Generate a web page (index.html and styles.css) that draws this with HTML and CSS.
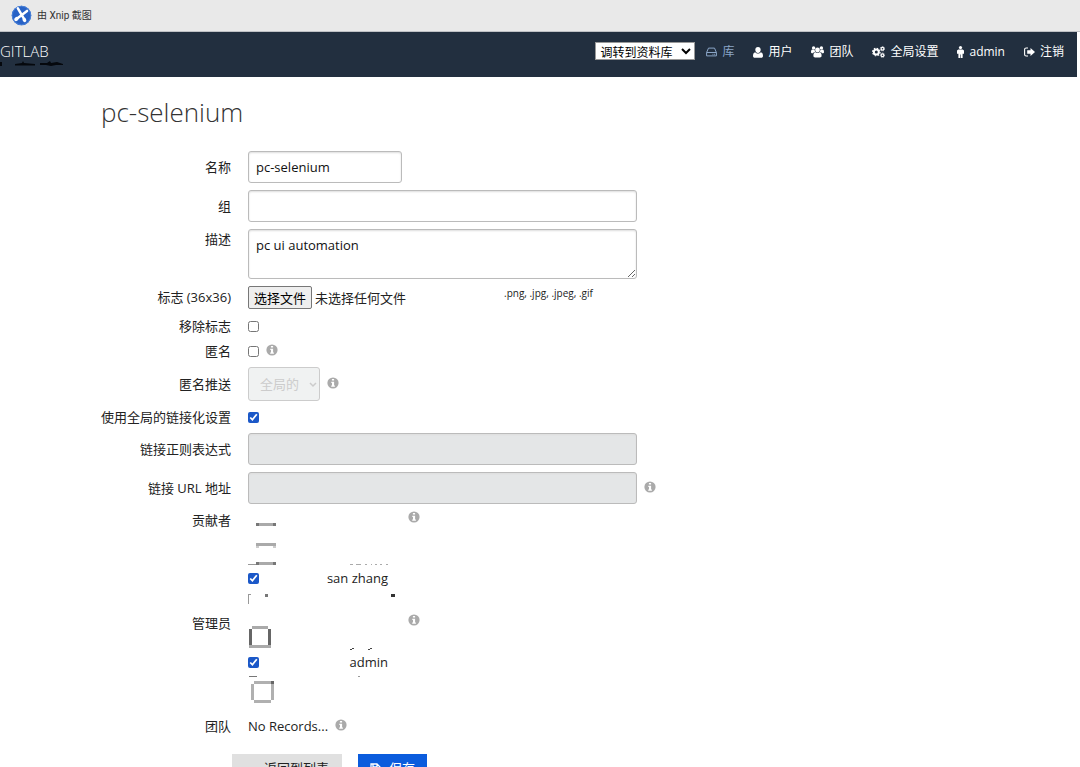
FILE: index.html
```html
<!DOCTYPE html>
<html lang="zh-CN">
<head>
<meta charset="utf-8">
<title>pc-selenium</title>
<link rel="stylesheet" href="styles.css">
</head>
<body>
<svg class="defs" width="0" height="0" aria-hidden="true">
  <symbol id="info" viewBox="0 0 12 12"><circle cx="6" cy="6" r="5.6" fill="#aaa"/><path d="M4.9 1.9h2.2v1.7H4.9zM4.3 4.7h2.8v3.7h.8v1.3H4.2V8.4H5V6h-.7z" fill="#fff"/></symbol>
</svg>
<div class="capture">
  <svg class="capture-logo" viewBox="0 0 22 22"><circle cx="11" cy="11" r="10.2" fill="#2862c6"/><circle cx="11" cy="11" r="9.7" fill="none" stroke="#4b82d8"/><path d="M7.2 3.5 12.7 13M16.8 6.2 7.5 13.3" stroke="#fff" stroke-width="2.6" stroke-linecap="round"/><ellipse cx="5.7" cy="14.6" rx="2.5" ry="2" fill="#fff" transform="rotate(-38 5.7 14.6)"/><ellipse cx="14" cy="15.5" rx="1.9" ry="2.6" fill="#fff" transform="rotate(-25 14 15.5)"/></svg>
  <span>由 Xnip 截图</span>
</div>
<header class="navbar">
  <div class="brand">GITLAB
    <svg class="brand-marks" viewBox="0 0 64 8"><path d="M0 2h2v4H0zM15 4l7-1 1-2 1 2 11 1v1.500H15zM40 3l7 0 3-2 1 2 6-1 6 2v1h-7l-5 1-5-1h-6z" fill="#05080d"/></svg>
  </div>
  <nav class="menu">
    <select class="jump" aria-label="调转到资料库"><option>调转到资料库</option></select>
    <a class="item active" href="#"><svg width="11" height="10" viewBox="0 0 11 10"><path d="M.6 5.500 2.500 1.100h6l1.900 4.400v3.400H.6zM.6 5.500h9.800M6.500 7.300h.9M8.200 7.300h.9" fill="none" stroke="currentColor"/></svg>库</a>
    <a class="item" href="#"><svg width="10" height="11" viewBox="0 0 10 11"><path d="M5 0C3.200 0 2.300 1.300 2.300 2.800S3.500 6 5 6s2.700-1.700 2.700-3.200S6.800 0 5 0zM2.200 5.200C.5 5.600 0 7.200 0 9c0 1.200.8 1.800 1.800 1.800h6.400C9.200 10.800 10 10.200 10 9c0-1.800-.5-3.400-2.200-3.800C6.500 7 3.500 7 2.200 5.200z" fill="currentColor"/></svg>用户</a>
    <a class="item" href="#"><svg width="13" height="12" viewBox="0 0 13 12"><g fill="currentColor"><circle cx="2.600" cy="2" r="1.700"/><circle cx="10.400" cy="2" r="1.700"/><circle cx="6.500" cy="4" r="2.400"/><path d="M0 6.300C0 4.800.4 3.700 1.200 3.600c.8.600 1.800.6 2.500.2-.1 1 .1 1.800.7 2.400H2.800L2 7.200H1C.4 7.200 0 6.900 0 6.300zM13 6.300c0-1.500-.4-2.600-1.200-2.700-.8.600-1.800.6-2.500.2.1 1-.1 1.800-.7 2.400h1.600l.8 1h1c.6 0 1-.3 1-.9zM4.400 6.300C2.800 6.600 2.400 8 2.400 9.700c0 1 .7 1.700 1.700 1.700h4.800c1 0 1.700-.7 1.700-1.700 0-1.700-.4-3.100-2-3.400-1.200 1-3 1-4.200 0z"/></g></svg>团队</a>
    <a class="item" href="#"><svg width="13" height="12" viewBox="0 0 13 12"><g fill="none" stroke="currentColor"><circle cx="4.300" cy="6" r="2.500" stroke-width="2"/><circle cx="4.300" cy="6" r="3.800" stroke-width="1.100" stroke-dasharray="1.500 1.485"/><circle cx="10.500" cy="2.700" r="1.400" stroke-width="1.200"/><circle cx="10.500" cy="2.700" r="2.200" stroke-width=".7" stroke-dasharray="1 .73"/><circle cx="10.500" cy="9.200" r="1.400" stroke-width="1.200"/><circle cx="10.500" cy="9.200" r="2.200" stroke-width=".7" stroke-dasharray="1 .73"/></g></svg>全局设置</a>
    <a class="item" href="#"><svg width="7" height="12" viewBox="0 0 7 12"><circle cx="3.500" cy="1.600" r="1.600" fill="currentColor"/><path d="M1.300 3.400h4.400L7 4.500v3.300H5.600V12H3.800V8.600h-.6V12H1.400V7.800H0V4.500z" fill="currentColor"/></svg>admin</a>
    <a class="item" href="#"><svg width="11" height="10" viewBox="0 0 11 10"><path d="M4 1H2.200C1.200 1 .6 1.600.6 2.500v5C.6 8.400 1.200 9 2.200 9H4" fill="none" stroke="currentColor" stroke-width="1.100"/><path d="M6.500 1 11 5 6.500 9V6.700H3.200V3.300h3.300z" fill="currentColor"/></svg>注销</a>
  </nav>
</header>
<main class="page">
  <h1 class="title">pc-selenium</h1>
  <form class="form">
    <div class="row"><label class="label" for="name">名称</label><div class="field"><input class="text short" id="name" type="text" value="pc-selenium"></div></div>
    <div class="row"><label class="label" for="group">组</label><div class="field"><input class="text" id="group" type="text"></div></div>
    <div class="row top"><label class="label" for="desc">描述</label><div class="field"><textarea class="text area" id="desc">pc ui automation</textarea></div></div>
    <div class="row upload"><label class="label" for="logo">标志 (36x36)</label><div class="field file"><span class="picker"><button class="choose" id="logo" type="button">选择文件</button><span>未选择任何文件</span></span><small class="hint">.png, .jpg, .jpeg, .gif</small></div></div>
    <div class="row line"><label class="label" for="remove">移除标志</label><div class="field"><input class="check" id="remove" type="checkbox"></div></div>
    <div class="row line"><label class="label" for="anon">匿名</label><div class="field"><input class="check" id="anon" type="checkbox"><svg class="info"><use href="#info"/></svg></div></div>
    <div class="row"><label class="label" for="push">匿名推送</label><div class="field"><span class="select-box"><select class="push" id="push" disabled><option>全局的</option></select><svg class="chevron" viewBox="0 0 8 6"><path d="m1 1 3 3 3-3" fill="none" stroke="#ccc" stroke-width="1.500"/></svg></span><svg class="info"><use href="#info"/></svg></div></div>
    <div class="row line"><label class="label" for="global">使用全局的链接化设置</label><div class="field"><input class="check" id="global" type="checkbox" checked></div></div>
    <div class="row"><label class="label" for="regex">链接正则表达式</label><div class="field"><input class="text" id="regex" type="text" disabled></div></div>
    <div class="row"><label class="label" for="url">链接 URL 地址</label><div class="field"><input class="text" id="url" type="text" disabled><svg class="info"><use href="#info"/></svg></div></div>
    <div class="row top people">
      <span class="label">贡献者</span>
      <div class="field members">
        <svg class="residue" viewBox="0 0 150 96" shape-rendering="crispEdges"><path d="M8 12h20v3H8zM10 51h17v3H10z" fill="#aaa"/><path d="M8 12h3v3H8zM25 12h3v3h-3zM8 51h3v3H8zM25 51h3v3h-3zM17 83h3v3h-3z" fill="#777"/><path d="M8 32h20v3H8z" fill="#aaa"/><path d="M8 35h3v2H8zM25 35h3v2h-3z" fill="#ccc"/><path d="M0 53h8v1H0zM0 83h1v10H0zM0 83h3v1H0z" fill="#999"/><path d="M102 53h3v1h-3zM108 53h5v1h-5zM117 53h2v1h-2zM123 53h1v1h-1zM127 53h2v1h-2zM132 53h2v1h-2zM138 53h2v1h-2z" fill="#aaa"/><path d="M143 83h4v3h-4z" fill="#333"/></svg>
        <label class="member"><input class="check" type="checkbox" checked><span>san zhang</span></label>
        <svg class="info"><use href="#info"/></svg>
      </div>
    </div>
    <div class="row top people">
      <span class="label">管理员</span>
      <div class="field members">
        <svg class="residue" viewBox="0 0 150 96" shape-rendering="crispEdges"><path d="M4 12h16v3H4zM1 31h22v3H1z" fill="#aaa"/><path d="M1 15h3v16H1zM20 15h3v16h-3z" fill="#666"/><path d="M1 62h8v1H1z" fill="#777"/><path d="M6 67h17v3H6zM3 70h3v16H3zM23 70h3v16h-3zM6 86h17v3H6z" fill="#b0b0b0"/><path d="M23 67h3v3h-3z" fill="#666"/><path d="M102 35h2v1h-2zM104 34h2v1h-2zM120 35h2v1h-2zM122 34h2v1h-2z" fill="#444"/><path d="M110 62h2v1h-2z" fill="#999"/></svg>
        <label class="member"><input class="check" type="checkbox" checked><span>admin</span></label>
        <svg class="info"><use href="#info"/></svg>
      </div>
    </div>
    <div class="row line"><span class="label">团队</span><div class="field"><span>No Records...</span><svg class="info"><use href="#info"/></svg></div></div>
    <div class="actions">
      <button class="btn" type="button">返回到列表</button>
      <button class="btn primary" type="submit"><svg width="11" height="11" viewBox="0 0 11 11"><path d="M1 1h6l3 3v6H1zM3 1v3h4V1M4 10V7h4v3" fill="none" stroke="#fff" stroke-width="1.300"/></svg>保存</button>
    </div>
  </form>
</main>
</body>
</html>
```
FILE: styles.css
```css
* { box-sizing: border-box; }
body {
  margin: 0;
  height: 100vh;
  overflow: hidden;
  background: #fff;
  color: #222;
  font: 13px/18px "Open Sans", "Noto Sans CJK SC", sans-serif;
}
input, select, textarea, button { font: inherit; }
svg { flex: none; }
.defs { position: absolute; }
.capture {
  display: flex;
  align-items: center;
  gap: 5px;
  height: 32px;
  padding-left: 11px;
  background: #e9e9e9;
  border-bottom: 1px solid #bfc1c5;
  color: #333;
  font: 10px/14px Roboto, "Noto Sans CJK SC", sans-serif;
}
.capture-logo { width: 21px; height: 21px; }
.navbar {
  display: flex;
  justify-content: space-between;
  align-items: flex-start;
  height: 45px;
  margin-right: 3px;
  padding: 8px 13px 0 0;
  background: #222f3f;
  color: #fff;
}
.brand {
  position: relative;
  padding-top: 2px;
  font-size: 15px;
  font-weight: 300;
}
.brand-marks {
  position: absolute;
  left: 0;
  top: 20px;
  width: 64px;
  height: 8px;
}
.menu {
  display: flex;
  align-items: center;
  gap: 19px;
  font-size: 12px;
}
.jump {
  width: 100px;
  height: 18px;
  margin-right: -8px;
  padding: 0;
  border: 1px solid #999;
  border-radius: 0;
  background: #fff;
  color: #000;
  line-height: 16px;
}
.item {
  display: flex;
  align-items: center;
  gap: 5px;
  padding-top: 3px;
  color: #fff;
  text-decoration: none;
}
.item.active { color: #8ba6c8; }
.title {
  margin: 0;
  padding: 17px 0 21px 101px;
  color: #333;
  font-size: 26px;
  font-weight: 300;
  line-height: 36px;
}
.form {
  display: flex;
  flex-direction: column;
  gap: 7px;
}
.row {
  display: grid;
  grid-template-columns: 231px minmax(0, 1fr);
  column-gap: 17px;
  align-items: center;
}
.row.top { align-items: start; }
.row.line { height: 18px; }
.row.upload {
  align-items: start;
  min-height: 24px;
}
.label {
  text-align: right;
  white-space: nowrap;
}
.upload .label { padding-top: 2px; }
.top .label { padding-top: 1px; }
.field {
  display: flex;
  align-items: center;
  gap: 7px;
}
.text {
  width: 100%;
  max-width: 389px;
  height: 32px;
  padding: 6px 7px;
  border: 1px solid #bbb;
  border-radius: 3px;
  background: #fff;
  box-shadow: inset 0 1px 2px #ddd;
  color: #111;
}
.text.short { max-width: 154px; }
.text.area {
  display: block;
  height: 50px;
  resize: both;
}
.text:disabled { background: #e4e6e7; }
.file { gap: 0; }
.picker {
  display: flex;
  align-items: center;
  gap: 3px;
  width: 256px;
}
.choose {
  height: 23px;
  padding: 0 5px;
  border: 1px solid #777;
  border-radius: 2px;
  background: #eee;
  color: #000;
}
.hint {
  font-size: 10px;
  line-height: 14px;
  padding-bottom: 9px;
}
.check {
  width: 11px;
  height: 11px;
  margin: 0;
  accent-color: #1b58c8;
}
.info {
  width: 12px;
  height: 12px;
  margin-bottom: 3px;
}
.select-box { position: relative; }
.push {
  display: block;
  width: 72px;
  height: 34px;
  padding: 0 11px;
  appearance: none;
  border: 1px solid #ccc;
  border-radius: 3px;
  background: #f0f2f2;
  color: #ccc;
  opacity: 1;
}
.chevron {
  position: absolute;
  right: 3px;
  top: 15px;
  width: 8px;
  height: 6px;
}
.people { min-height: 96px; }
.people .label { padding-top: 0; }
.members {
  position: relative;
  align-items: flex-start;
  gap: 20px;
}
.residue {
  position: absolute;
  left: 0;
  top: 0;
  width: 150px;
  height: 96px;
}
.member {
  display: flex;
  justify-content: space-between;
  align-items: center;
  width: 140px;
  padding-top: 58px;
}
.people + .people .member { padding-top: 39px; }
.actions {
  display: flex;
  gap: 16px;
  padding: 12px 0 0 232px;
}
.btn {
  display: flex;
  align-items: center;
  justify-content: center;
  gap: 8px;
  height: 28px;
  padding: 0 13px;
  border: 0;
  background: #e0e0e0;
  color: #222;
}
.btn:first-child { padding-left: 32px; }
.btn.primary {
  padding: 0 12px;
  background: #0b5cdd;
  color: #fff;
}
```
